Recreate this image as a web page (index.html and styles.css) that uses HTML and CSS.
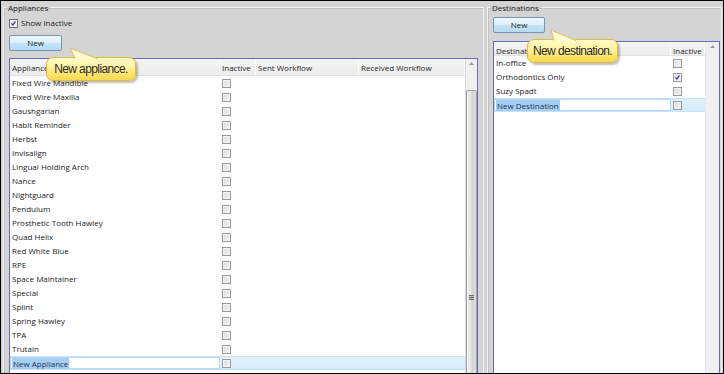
FILE: index.html
```html
<!DOCTYPE html>
<html>
<head>
<meta charset="utf-8">
<link rel="stylesheet" href="styles.css">
</head>
<body>
<div class="frame">
  <fieldset class="group group-left">
    <legend>Appliances</legend>
    <label class="show"><span class="cb cb-dark on"><svg viewBox="0 0 9 9"><path d="M2 4.3 L3.7 6.6 L7 1.8" /></svg></span>Show Inactive</label>
    <button class="btn">New</button>
    <div class="list list-app">
      <div class="table">
        <div class="row head">
          <div class="cell">Appliance</div>
          <div class="cell">Inactive</div>
          <div class="cell">Sent Workflow</div>
          <div class="cell">Received Workflow</div>
        </div>
        <div class="row"><div class="cell">Fixed Wire Mandible</div><div class="cell"><span class="cb"></span></div><div class="cell"></div><div class="cell"></div></div>
        <div class="row"><div class="cell">Fixed Wire Maxilla</div><div class="cell"><span class="cb"></span></div><div class="cell"></div><div class="cell"></div></div>
        <div class="row"><div class="cell">Gaushgarian</div><div class="cell"><span class="cb"></span></div><div class="cell"></div><div class="cell"></div></div>
        <div class="row"><div class="cell">Habit Reminder</div><div class="cell"><span class="cb"></span></div><div class="cell"></div><div class="cell"></div></div>
        <div class="row"><div class="cell">Herbst</div><div class="cell"><span class="cb"></span></div><div class="cell"></div><div class="cell"></div></div>
        <div class="row"><div class="cell">Invisalign</div><div class="cell"><span class="cb"></span></div><div class="cell"></div><div class="cell"></div></div>
        <div class="row"><div class="cell">Lingual Holding Arch</div><div class="cell"><span class="cb"></span></div><div class="cell"></div><div class="cell"></div></div>
        <div class="row"><div class="cell">Nance</div><div class="cell"><span class="cb"></span></div><div class="cell"></div><div class="cell"></div></div>
        <div class="row"><div class="cell">Nightguard</div><div class="cell"><span class="cb"></span></div><div class="cell"></div><div class="cell"></div></div>
        <div class="row"><div class="cell">Pendulum</div><div class="cell"><span class="cb"></span></div><div class="cell"></div><div class="cell"></div></div>
        <div class="row"><div class="cell">Prosthetic Tooth Hawley</div><div class="cell"><span class="cb"></span></div><div class="cell"></div><div class="cell"></div></div>
        <div class="row"><div class="cell">Quad Helix</div><div class="cell"><span class="cb"></span></div><div class="cell"></div><div class="cell"></div></div>
        <div class="row"><div class="cell">Red White Blue</div><div class="cell"><span class="cb"></span></div><div class="cell"></div><div class="cell"></div></div>
        <div class="row"><div class="cell">RPE</div><div class="cell"><span class="cb"></span></div><div class="cell"></div><div class="cell"></div></div>
        <div class="row"><div class="cell">Space Maintainer</div><div class="cell"><span class="cb"></span></div><div class="cell"></div><div class="cell"></div></div>
        <div class="row"><div class="cell">Special</div><div class="cell"><span class="cb"></span></div><div class="cell"></div><div class="cell"></div></div>
        <div class="row"><div class="cell">Splint</div><div class="cell"><span class="cb"></span></div><div class="cell"></div><div class="cell"></div></div>
        <div class="row"><div class="cell">Spring Hawley</div><div class="cell"><span class="cb"></span></div><div class="cell"></div><div class="cell"></div></div>
        <div class="row"><div class="cell">TPA</div><div class="cell"><span class="cb"></span></div><div class="cell"></div><div class="cell"></div></div>
        <div class="row"><div class="cell">Trutain</div><div class="cell"><span class="cb"></span></div><div class="cell"></div><div class="cell"></div></div>
        <div class="row editing"><div class="cell"><span class="edit"><span class="sel">New Appliance</span></span></div><div class="cell"><span class="cb"></span></div><div class="cell"></div><div class="cell"></div></div>
      </div>
      <div class="vscroll">
        <svg class="arrow" viewBox="0 0 5 3"><path d="M0 3 L2.5 0 L5 3 Z"/></svg>
        <div class="thumb"><span class="grip"></span></div>
      </div>
    </div>
  </fieldset>

  <fieldset class="group group-right">
    <legend>Destinations</legend>
    <button class="btn btn-right">New</button>
    <div class="list list-dest">
      <div class="table">
        <div class="row head">
          <div class="cell">Destination</div>
          <div class="cell">Inactive</div>
        </div>
        <div class="row"><div class="cell">In-office</div><div class="cell"><span class="cb"></span></div></div>
        <div class="row"><div class="cell">Orthodontics Only</div><div class="cell"><span class="cb on"><svg viewBox="0 0 9 9"><path d="M2 4.3 L3.7 6.6 L7 1.8" /></svg></span></div></div>
        <div class="row"><div class="cell">Suzy Spadt</div><div class="cell"><span class="cb"></span></div></div>
        <div class="row editing"><div class="cell"><span class="edit"><span class="sel">New Destination</span></span></div><div class="cell"><span class="cb"></span></div></div>
      </div>
      <div class="vscroll vscroll-off">
        <svg class="arrow" viewBox="0 0 5 3"><path d="M0 3 L2.5 0 L5 3 Z"/></svg>
      </div>
    </div>
  </fieldset>

  <div class="tip tip-app">New appliance.<svg class="tail" viewBox="0 0 36 12"><polygon points="4,1 9,11.6 31,11.6"/><polyline points="9,11.6 4,1 31,11.6"/></svg></div>
  <div class="tip tip-dest">New destination.<svg class="tail" viewBox="0 0 36 12"><polygon points="4,1 7,11.6 29,11.6"/><polyline points="7,11.6 4,1 29,11.6"/></svg></div>
</div>
</body>
</html>
```

FILE: styles.css
```css
* { box-sizing: border-box; }

body {
  margin: 0;
  font-family: "Open Sans", "Noto Sans", sans-serif;
  font-size: 8px;
  color: #1b1b1b;
}

.frame {
  position: relative;
  width: 724px;
  height: 374px;
  border: 1px solid #000;
  background: #d4d4d4;
  display: flex;
  align-items: flex-start;
  gap: 3px;
  padding-left: 2px;
  overflow: hidden;
}

.group {
  margin: 0;
  height: 420px;
  min-width: 0;
  border: 1px solid #f2f2f2;
  box-shadow: inset 1px 1px 0 #c2c2c2;
  padding: 0 5px;
  display: flex;
  flex-direction: column;
  align-items: flex-start;
}

.group-left { width: 481px; }
.group-right { width: 235px; padding: 0 1px 0 5px; }

legend {
  line-height: 13px;
  padding: 0 2px;
  margin-left: -3px;
  color: #1b1b1b;
}

.show {
  display: flex;
  align-items: center;
  gap: 3px;
  height: 10px;
  margin-top: 4px;
  line-height: 10px;
}

.btn {
  display: block;
  width: 53px;
  height: 16px;
  margin-top: 7px;
  padding: 0;
  border: 1px solid #7995b4;
  border-radius: 2px;
  background: linear-gradient(#f0f8fe, #dcefFb 48%, #c6e4f7 52%, #b5daf3);
  font-family: inherit;
  font-size: 8px;
  color: #222;
  line-height: 14px;
}

.btn-right { width: 52px; margin-top: 3px; }

.list {
  display: flex;
  margin-top: 7px;
  border: 1px solid #6a6abd;
  background: #fff;
  height: 340px;
  width: 100%;
}

.list-dest { margin-top: 8px; }

.table {
  flex: 1;
  display: flex;
  flex-direction: column;
}

.row {
  display: grid;
  height: 14px;
  line-height: 14px;
}

.list-app .row { grid-template-columns: 210px 36px 103px 106px; }
.list-dest .row { grid-template-columns: 177px 34px; }

.row.head {
  background: linear-gradient(#f5f5f5, #ececec);
  border-bottom: 1px solid #e2e2e2;
  color: #262626;
}

.list-app .row.head { height: 17px; line-height: 18px; }
.list-dest .row.head { height: 14px; line-height: 17px; }

.head .cell { border-right: 1px solid #fbfbfb; }

.cell {
  padding-left: 2px;
  white-space: nowrap;
  overflow: hidden;
  display: flex;
  align-items: center;
}

.head .cell { display: block; }

.cb {
  display: inline-block;
  width: 9px;
  height: 9px;
  border: 1px solid #9a9a9a;
  background: linear-gradient(135deg, #d9d9d9, #f6f6f6);
  box-shadow: inset 0 0 0 1px #f1f1f1;
  flex: none;
}

.cb svg {
  display: block;
  width: 7px;
  height: 7px;
}

.cb path {
  fill: none;
  stroke: #2e2e9a;
  stroke-width: 1.4;
}

.cb-dark { border-color: #707070; }

.row.editing {
  background: linear-gradient(#e3f1fd, #d4ebfc);
  border-top: 1px solid #c4e2fa;
  border-bottom: 1px solid #c4e2fa;
}

.row.editing .cell { padding-left: 0; }

.edit {
  display: flex;
  align-items: center;
  width: 100%;
  height: 100%;
  background: #fff;
  border: 1px solid #b6d9f3;
  padding-left: 1px;
}

.row.editing .cell:nth-child(2) { padding-left: 2px; }

.sel {
  background: #a5cff2;
  color: #1c3558;
  line-height: 11px;
  padding: 0 1px;
}

.vscroll {
  width: 12px;
  flex: none;
  background: #f0f0f0;
  border-left: 1px solid #d7d7d7;
  display: flex;
  flex-direction: column;
  align-items: center;
}

.vscroll-off { width: 14px; border-left: 1px solid #e8e8e8; }

.arrow {
  width: 5px;
  height: 3px;
  margin-top: 3px;
  fill: #9a9a9a;
  flex: none;
}

.thumb {
  margin-top: 25px;
  width: 11px;
  height: 400px;
  border: 1px solid #a3a3a3;
  border-radius: 2px;
  background: linear-gradient(90deg, #f2f2f2, #e4e4e4 40%, #d3d3d3 60%, #dedede);
  display: flex;
  justify-content: center;
  padding-top: 204px;
}

.grip {
  display: block;
  width: 5px;
  height: 5px;
  background: repeating-linear-gradient(#6d6d6d 0 1px, #b9b9b9 1px 2px);
}

.tip {
  position: absolute;
  width: 90px;
  height: 24px;
  border: 1px solid #dfba43;
  border-radius: 7px;
  background: linear-gradient(#fffcc6, #fff2a2 40%, #fde36a 75%, #fbd84f);
  box-shadow: 2px 2px 2px rgba(0, 0, 0, 0.25);
  font-family: "Liberation Sans", Arial, sans-serif;
  font-size: 12px;
  letter-spacing: -0.6px;
  color: #2b2b2b;
  display: flex;
  align-items: center;
  justify-content: center;
}

.tip-app { left: 45px; top: 56px; }
.tip-dest { left: 526px; top: 38px; width: 91px; }

.tail {
  position: absolute;
  left: 19px;
  top: -11px;
  width: 36px;
  height: 12px;
  overflow: visible;
}

.tail polygon { fill: #fffad0; }
.tail polyline { fill: none; stroke: #dcc060; stroke-width: 1; }
```
